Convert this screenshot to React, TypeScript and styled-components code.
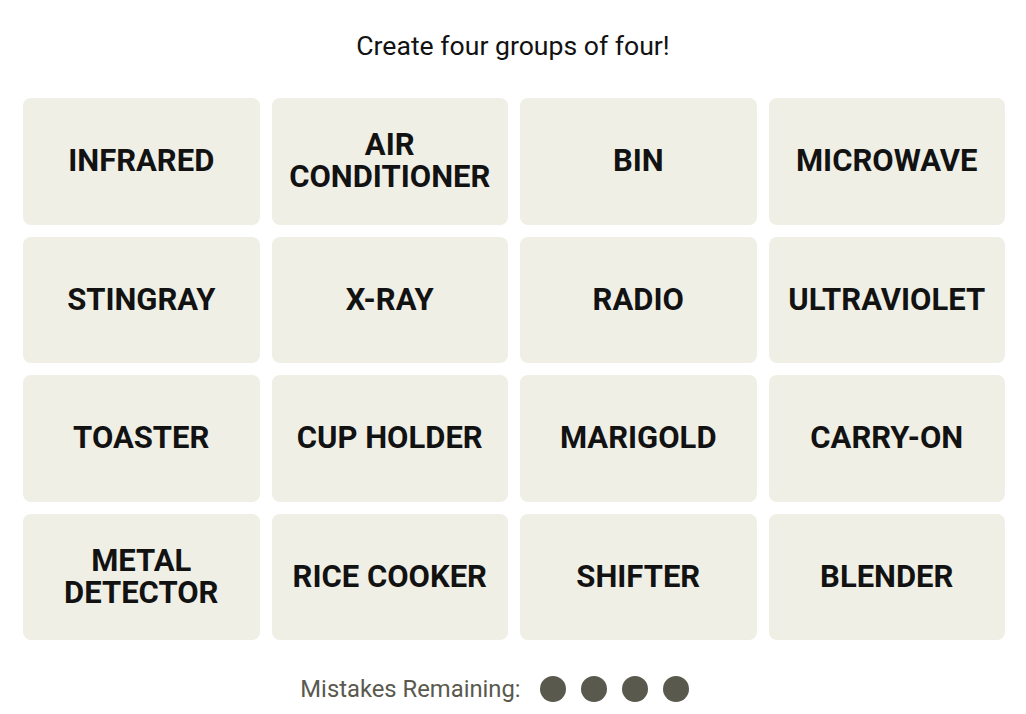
import React from "react";
import styled, { createGlobalStyle } from "styled-components";

const GlobalStyle = createGlobalStyle`
  body {
    margin: 0;
    background: #ffffff;
    font-family: Roboto, "Liberation Sans", sans-serif;
    color: #121212;
  }
`;

const Page = styled.div`
  width: 1026px;
  height: 714px;
  display: flex;
  flex-direction: column;
  align-items: center;
`;

const Title = styled.div`
  font-size: 26.6px;
  font-weight: 400;
  height: 34px;
  line-height: 34px;
  margin-top: 29px;
  margin-bottom: 35px;
  color: #121212;
`;

const Board = styled.div`
  display: grid;
  grid-template-columns: repeat(4, 236.5px);
  grid-auto-rows: 126.5px;
  gap: 12px;
  margin-left: 2px;
`;

const Tile = styled.div`
  background: #efefe6;
  border-radius: 8px;
  display: flex;
  align-items: center;
  justify-content: center;
  text-align: center;
  font-size: 31px;
  font-weight: 700;
  line-height: 32px;
  text-transform: uppercase;
  color: #121212;
  padding: 0 8px;
`;

const Footer = styled.div`
  margin-top: 35px;
  display: flex;
  align-items: center;
  gap: 15px;
  margin-right: 37px;
`;

const Label = styled.span`
  font-size: 23.8px;
  color: #5a594e;
  margin-right: 4px;
`;

const Dot = styled.span`
  width: 26px;
  height: 26px;
  border-radius: 50%;
  background: #5a594e;
`;

const words = [
  "Infrared",
  "Air Conditioner",
  "Bin",
  "Microwave",
  "Stingray",
  "X-Ray",
  "Radio",
  "Ultraviolet",
  "Toaster",
  "Cup Holder",
  "Marigold",
  "Carry-On",
  "Metal Detector",
  "Rice Cooker",
  "Shifter",
  "Blender",
];

const breaks: Record<string, string[]> = {
  "Air Conditioner": ["Air", "Conditioner"],
  "Metal Detector": ["Metal", "Detector"],
};

export default function App() {
  return (
    <>
      <GlobalStyle />
      <Page>
        <Title>Create four groups of four!</Title>
        <Board>
          {words.map((w) => (
            <Tile key={w}>
              {breaks[w] ? (
                <span>
                  {breaks[w][0]}
                  <br />
                  {breaks[w][1]}
                </span>
              ) : (
                w
              )}
            </Tile>
          ))}
        </Board>
        <Footer>
          <Label>Mistakes Remaining:</Label>
          <Dot />
          <Dot />
          <Dot />
          <Dot />
        </Footer>
      </Page>
    </>
  );
}
